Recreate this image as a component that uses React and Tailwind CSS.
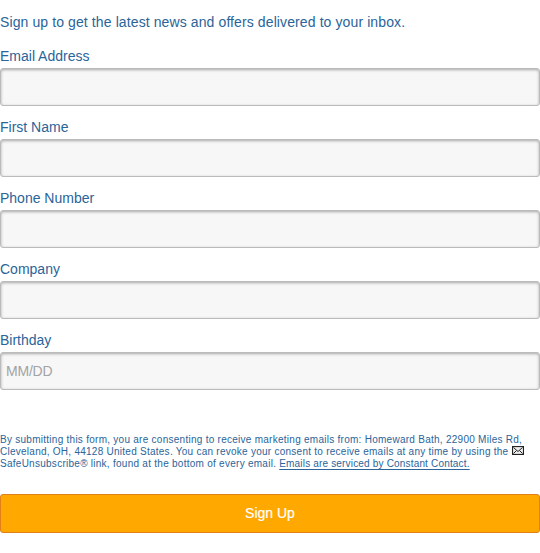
const fields = [
  { id: 'email', label: 'Email Address' },
  { id: 'first', label: 'First Name' },
  { id: 'phone', label: 'Phone Number' },
  { id: 'company', label: 'Company' },
  { id: 'birthday', label: 'Birthday', placeholder: 'MM/DD' },
];

function Envelope() {
  return (
    <svg className="ml-px inline-block h-[9px] w-3 align-baseline" viewBox="0 0 12 9" fill="none" stroke="#222" strokeWidth="1">
      <rect x="0.5" y="0.5" width="11" height="8" fill="#eee" strokeWidth="1.2" />
      <path d="M1.500 1.500l4.500 4 4.500-4M1.500 7.500l3-3M10.500 7.500l-3-3" />
    </svg>
  );
}

export default function App() {
  return (
    <form className="h-[553px] w-[540px] bg-white pt-[14px] font-['Liberation_Sans',Arial,sans-serif] text-[14px] leading-4 text-[#2a6499]">
      <p className="mb-[18px] tracking-[0.105px]">Sign up to get the latest news and offers delivered to your inbox.</p>
      {fields.map((f) => (
        <div key={f.id} className="mb-[13px] flex flex-col gap-1">
          <label htmlFor={f.id}>{f.label}</label>
          <input
            id={f.id}
            placeholder={f.placeholder}
            className="h-[38px] w-full rounded-[3px] border border-[#bbbbbb] bg-[#f7f7f7] px-[5px] shadow-[inset_0_1px_3px_#a8a8a8] placeholder:tracking-[-0.2px] placeholder:text-[#a3a3a3]"
          />
        </div>
      ))}
      <p className="mt-[44px] text-[10px] leading-3 tracking-[0.265px] whitespace-nowrap">
        By submitting this form, you are consenting to receive marketing emails from: Homeward Bath, 22900 Miles Rd,<br />
        <span className="tracking-[0.255px]">Cleveland, OH, 44128 United States. You can revoke your consent to receive emails at any time by using the <Envelope /></span><br />
        SafeUnsubscribe® link, found at the bottom of every email. <a className="tracking-[0.175px] underline underline-offset-2">Emails are serviced by Constant Contact.</a>
      </p>
      <button type="button" className="mt-6 h-[39px] w-full rounded-[3px] border border-[#e0801a] bg-[#ffa800] pb-0.5 text-white [-webkit-text-stroke:0.2px_white]">Sign Up</button>
    </form>
  );
}
